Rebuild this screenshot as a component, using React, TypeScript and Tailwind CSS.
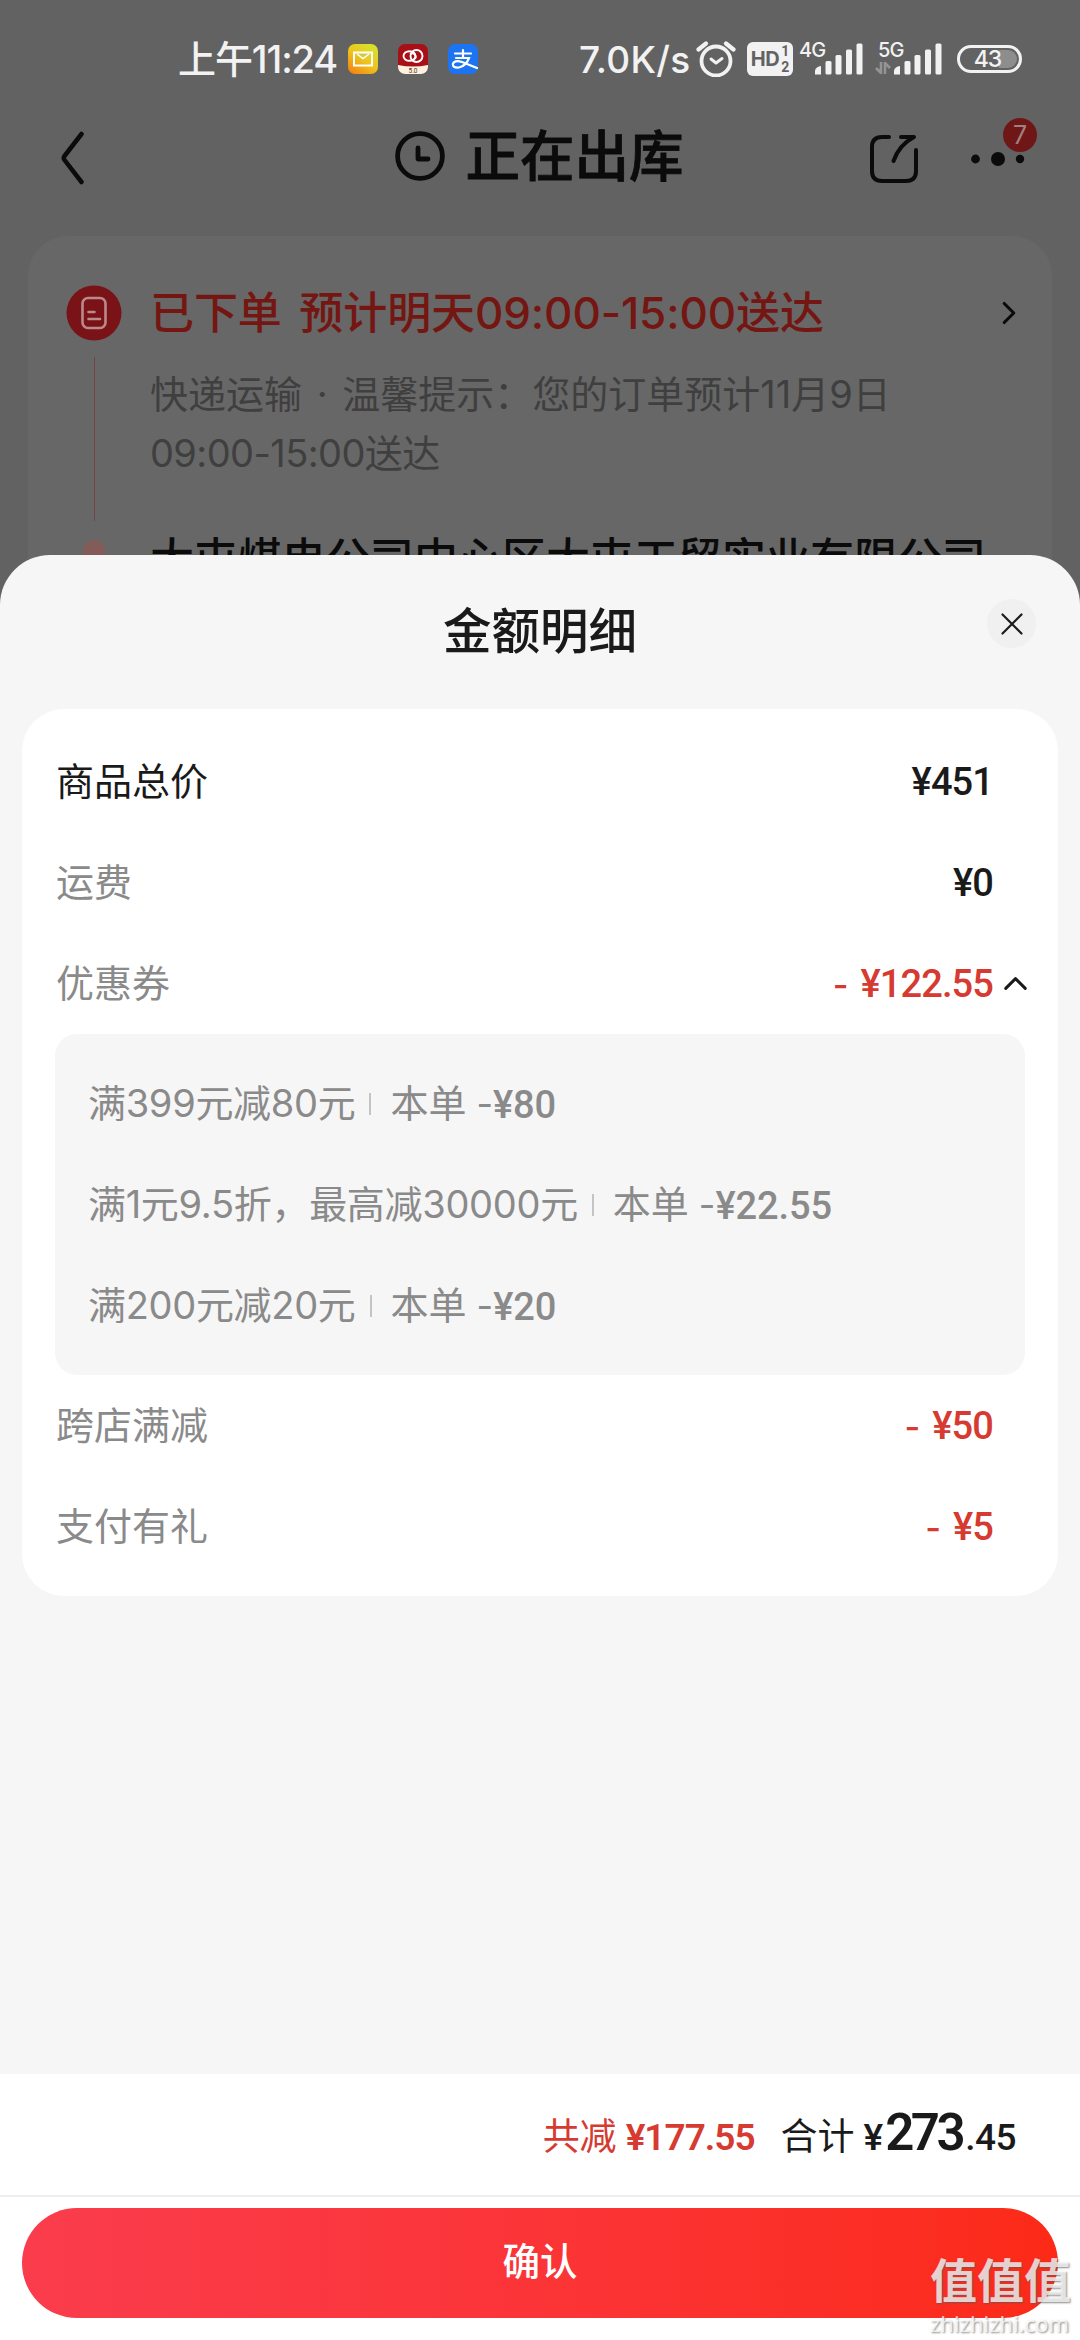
import { ChevronRight, ChevronUp } from 'lucide-react'

const COUPONS = [
  { rule: '满399元减80元', amount: '¥80' },
  { rule: '满1元9.5折，最高减30000元', amount: '¥22.55' },
  { rule: '满200元减20元', amount: '¥20' },
]

function SignalBars() {
  return (
    <svg viewBox="0 0 48 32" className="w-[48px] h-[32px]" fill="#f2f2f2">
      <path d="M0 31.5v-4q1-4 6-4.500v8.500z" />
      <rect x="10.500" y="18" width="6" height="13.500" rx="1.500" />
      <rect x="20.500" y="12" width="6" height="19.500" rx="1.500" />
      <rect x="31" y="6.500" width="6" height="25" rx="1.500" />
      <rect x="41.500" y="0.500" width="6" height="31" rx="1.500" />
    </svg>
  )
}

function StatusBar() {
  return (
    <div className="h-[118px] pl-[178px] pr-[58px] flex items-center justify-between text-[#f2f2f2]">
      <div className="flex items-center">
        <span className="w-[170px] text-[38px] leading-none font-medium whitespace-nowrap tracking-[-1.1px]">上午11:24</span>
        <svg viewBox="0 0 30 30" className="w-[30px] h-[30px]">
          <defs>
            <linearGradient id="mail" x1="0" y1="1" x2="0.7" y2="0">
              <stop offset="0" stopColor="#f47a12" />
              <stop offset="0.55" stopColor="#eec41c" />
              <stop offset="1" stopColor="#d9e02c" />
            </linearGradient>
          </defs>
          <rect width="30" height="30" rx="7" fill="url(#mail)" />
          <rect x="6" y="8.500" width="18" height="13" fill="none" stroke="#fff" strokeWidth="2" />
          <path d="M9 10l6 4.500 6-4.500" fill="#cfc94a" stroke="#fff" strokeWidth="1.500" />
        </svg>
        <svg viewBox="0 0 30 30" className="w-[30px] h-[30px] ml-5">
          <rect width="30" height="30" rx="7" fill="#a90f16" />
          <path d="M0 21q15 3 30 0v2a7 7 0 0 1-7 7H7a7 7 0 0 1-7-7z" fill="#fbf3df" />
          <g fill="none" stroke="#fff" strokeWidth="1.900">
            <ellipse cx="11.500" cy="12" rx="6" ry="4.800" />
            <circle cx="18.500" cy="12" r="6" />
            <path d="M12 10q3-2 5 1t-1 4" />
          </g>
          <text x="15" y="28.500" fontSize="6.500" textAnchor="middle" fill="#5b2c22" fontFamily="Roboto, sans-serif">5.0</text>
        </svg>
        <svg viewBox="0 0 30 30" className="w-[30px] h-[30px] ml-5">
          <rect width="30" height="30" rx="7" fill="#1c74f2" />
          <g fill="none" stroke="#fff" strokeWidth="2.200" strokeLinecap="round">
            <path d="M7 9.500h16M15 6v8M8 14h13q-3 8-10 9.500-7 .5-6-4 2-4 9-1.500l15 6" />
          </g>
        </svg>
      </div>
      <div className="flex items-center">
        <span className="w-[117px] text-[37px] leading-none font-medium tracking-[0.3px]">7.0K/s</span>
        <svg viewBox="0 0 40 36" className="w-[40px] h-[36px]" fill="none" stroke="#f2f2f2" strokeLinecap="round">
          <circle cx="20" cy="20" r="14.500" strokeWidth="3.800" />
          <path d="M2.500 8.500l7.500-6M37.500 8.500l-7.500-6" strokeWidth="4.200" />
          <path d="M15 18l5 4 6-4.500" strokeWidth="3" strokeLinejoin="round" />
        </svg>
        <div className="ml-[11px] w-[46px] h-[34px] rounded-[6px] bg-[#f2f2f2] text-[#626262] flex items-center justify-center">
          <span className="text-[20px] font-bold leading-none tracking-[-0.5px]">HD</span>
          <span className="ml-[2px] font-['Roboto'] text-[14px] font-bold leading-[16px] flex flex-col items-center">
            <span>1</span>
            <span>2</span>
          </span>
        </div>
        <div className="relative ml-[22px] w-[48px]">
          <SignalBars />
          <span className="absolute -left-[16px] -top-[3px] text-[20px] leading-none font-medium tracking-[-0.8px]">4G</span>
        </div>
        <div className="relative ml-[31px] w-[48px]">
          <SignalBars />
          <span className="absolute -left-[16px] -top-[3px] text-[20px] leading-none font-medium tracking-[-0.8px]">5G</span>
          <svg viewBox="0 0 16 12" className="absolute -left-[19px] top-[19px] w-[16px] h-[12px]" fill="none" stroke="#949494" strokeWidth="2.600">
            <path d="M6 0v11L1 6M10 12V1l5 5" />
          </svg>
        </div>
        <div className="relative ml-[15px] w-[65px] h-[28px] rounded-full border-[3px] border-[#f2f2f2] flex items-center justify-center">
          <div className="absolute right-[2px] w-[18px] h-[18px] rounded-r-full bg-[#8d8d8d]" />
          <span className="relative -left-[2px] text-[23px] leading-none font-medium tracking-[-1px]">43</span>
        </div>
      </div>
    </div>
  )
}

function NavBar() {
  return (
    <div className="h-[118px] pb-[42px] pl-[60px] pr-[43px] flex items-center justify-between text-[#0b0b0b]">
      <svg viewBox="0 0 26 54" className="mt-1 w-[26px] h-[54px]" fill="none" stroke="currentColor" strokeWidth="4.500" strokeLinecap="round" strokeLinejoin="round">
        <path d="M21.500 3L4.500 25q-1.500 2 0 4l17 22" />
      </svg>
      <div className="ml-[124px] flex items-center">
        <svg viewBox="0 0 50 50" className="w-[50px] h-[50px]" fill="none" stroke="currentColor" strokeWidth="4.800">
          <circle cx="25" cy="25" r="22.400" />
          <path d="M23 17v11h10" strokeLinecap="round" strokeLinejoin="round" />
        </svg>
        <h1 className="ml-[20px] text-[54.5px] leading-none font-medium [-webkit-text-stroke:0.8px_#0b0b0b]">正在出库</h1>
      </div>
      <div className="mt-[6px] flex items-center">
        <svg viewBox="0 0 50 50" className="w-[50px] h-[50px]" fill="none" stroke="currentColor" strokeWidth="4" strokeLinecap="round" strokeLinejoin="round">
          <path d="M20 3h-7Q3 3 3 13v24q0 10 10 10h24q10 0 10-10V16" />
          <path d="M32 3h13Q30 11 24.500 27" />
        </svg>
        <div className="relative ml-[52px] w-[66px] h-[14px]">
          <svg viewBox="0 0 66 14" className="w-[66px] h-[14px]" fill="currentColor">
            <circle cx="4.500" cy="7" r="4.400" />
            <circle cx="27" cy="7" r="7" />
            <circle cx="49" cy="7" r="4.200" />
          </svg>
          <div className="absolute left-[32px] -top-[34px] w-[34px] h-[34px] rounded-full bg-[#6f1616] text-[#a08080] text-[25px] leading-none flex items-center justify-center">7</div>
        </div>
      </div>
    </div>
  )
}

function OrderCard() {
  return (
    <div className="mx-[28px] h-[500px] rounded-[40px] bg-[#676767] pl-[38px] pr-[24px] pt-[49px] flex">
      {/* Timeline rail */}
      <div className="w-[56px] flex flex-col items-center">
        <svg viewBox="0 0 56 56" className="w-[56px] h-[56px]">
          <circle cx="28" cy="28" r="27.500" fill="#7a1318" />
          <g fill="none" stroke="#b98a88" strokeWidth="2.600" strokeLinecap="round">
            <rect x="16.500" y="13" width="23" height="30" rx="5.500" />
            <path d="M22.500 27h6M22.500 34h11.500" />
          </g>
        </svg>
        <div className="mt-[16px] w-px h-[164px] bg-[#6f4444]" />
        <div className="mt-[19px] w-[22px] h-[22px] rounded-full bg-[#835c59]" />
      </div>
      <div className="ml-[28px] flex-1 whitespace-nowrap">
        <div className="h-[56px] flex items-center justify-between">
          <span className="text-[44px] leading-none font-medium [word-spacing:6px] tracking-[-0.1px] text-[#741612]">已下单 预计明天09:00-15:00送达</span>
          <ChevronRight className="w-[38px] h-[38px] text-[#0b0b0b]" strokeWidth={2} />
        </div>
        <div className="mt-[24px] text-[38px] leading-[59px] text-[#3f3f3f]">
          <span className="[word-spacing:4px]">快递运输 · 温馨提示：您的订单预计11月9日</span>
          <br />
          <span className="tracking-[-0.6px]">09:00-15:00送达</span>
        </div>
        <div className="mt-[48px] text-[44px] leading-[56px] font-medium text-[#0b0b0b]">大屯煤电公司中心区大屯工贸实业有限公司</div>
      </div>
    </div>
  )
}

function Price({ value, minus = false }: { value: string; minus?: boolean }) {
  return (
    <span className={`mt-[2px] font-['Roboto'] text-[38px] font-medium tracking-[-0.9px] ${minus ? 'text-[#d63a30]' : 'text-[#1a1a1a]'}`}>
      {minus && <span className="mr-[13px] font-['Inter'] text-[34px] font-medium">-</span>}
      {value}
    </span>
  )
}

function Row({ label, value, minus, dark, open }: { label: string; value: string; minus?: boolean; dark?: boolean; open?: boolean }) {
  return (
    <div className="h-[101px] pl-[34px] flex items-center">
      <span className={`flex-1 text-[38px] ${dark ? 'text-[#1a1a1a]' : 'text-[#8a8a8a]'}`}>{label}</span>
      <Price value={value} minus={minus} />
      <div className="w-[65px] pl-[3px]">
        {open && <ChevronUp className="w-[39px] h-[39px] text-[#1a1a1a]" strokeWidth={1.8} />}
      </div>
    </div>
  )
}

export default function App() {
  return (
    <div className="relative w-[1080px] h-[2340px] overflow-hidden bg-[#626262] font-['Inter','Noto_Sans_CJK_SC',sans-serif]">
      <StatusBar />
      <NavBar />
      <OrderCard />

      {/* Bottom sheet */}
      <div className="absolute inset-x-0 bottom-0 h-[1785px] rounded-t-[50px] overflow-hidden bg-[#f6f6f6] flex flex-col">
        <div className="relative h-[154px] flex items-center justify-center">
          <h2 className="text-[48.5px] leading-none font-medium text-[#1a1a1a]">金额明细</h2>
          <button className="absolute right-[44px] top-[44px] w-[49px] h-[49px] rounded-full bg-[#f0f0f0] flex items-center justify-center">
            <svg viewBox="0 0 22 22" className="w-[22px] h-[22px]" stroke="#1a1a1a" strokeWidth="2.200" strokeLinecap="round">
              <path d="M1.500 1.500l19 19M20.500 1.500l-19 19" />
            </svg>
          </button>
        </div>

        <div className="mx-[22px] pt-[22px] pb-[19px] rounded-[42px] bg-white">
          <Row label="商品总价" value="¥451" dark />
          <Row label="运费" value="¥0" />
          <Row label="优惠券" value="¥122.55" minus open />
          <div className="mx-[33px] py-[19px] pl-[33px] rounded-[22px] bg-[#f6f6f6] text-[38px] text-[#8a8a8a]">
            {COUPONS.map(coupon => (
              <div key={coupon.rule} className="h-[101px] flex items-center whitespace-nowrap">
                <span className="tracking-[-0.3px]">{coupon.rule}</span>
                <span className="ml-[14px] w-[2px] h-[22px] bg-[#c4c4c4]" />
                <span className="ml-[19px]">本单</span>
                <span className="ml-[10px] text-[36px]">-</span>
                <span className="mt-[3px] font-['Roboto'] font-medium tracking-[-0.1px]">{coupon.amount}</span>
              </div>
            ))}
          </div>
          <Row label="跨店满减" value="¥50" minus />
          <Row label="支付有礼" value="¥5" minus />
        </div>

        {/* Totals and confirm */}
        <div className="mt-auto h-[266px] bg-white">
          <div className="h-[123px] pr-[64px] flex items-baseline justify-end text-[37px] leading-[118px] border-b-2 border-[#eceeee]">
            <span className="text-[#d63a30]">共减</span>
            <span className="ml-[9px] font-['Roboto'] font-semibold tracking-[-1px] text-[#d63a30]">¥177.55</span>
            <span className="ml-[26px] text-[#1a1a1a]">合计</span>
            <span className="ml-[9px] mr-[2px] font-['Roboto'] font-medium text-[#1a1a1a]">¥</span>
            <span className="font-['Roboto'] text-[51px] font-semibold tracking-[-3.5px] text-[#1a1a1a]">273</span>
            <span className="ml-[3px] font-['Roboto'] font-medium tracking-[-0.5px] text-[#1a1a1a]">.45</span>
          </div>
          <button className="mx-[22px] mt-[11px] w-[1036px] h-[110px] rounded-full bg-linear-to-r from-[#fa3c4c] to-[#fc2a16] pb-[2px] text-white text-[37.5px] font-medium flex items-center justify-center">确认</button>
        </div>
      </div>

      {/* Site watermark */}
      <div className="absolute right-[8px] bottom-0 w-[142px] whitespace-nowrap text-white/75 [text-shadow:1px_1px_2px_rgba(90,90,90,0.7)]">
        <div className="text-[47px] leading-[50px] font-bold">值值值</div>
        <div className="font-['Noto_Sans'] text-[22px] leading-[34px]">zhizhizhi.com</div>
      </div>
    </div>
  )
}
